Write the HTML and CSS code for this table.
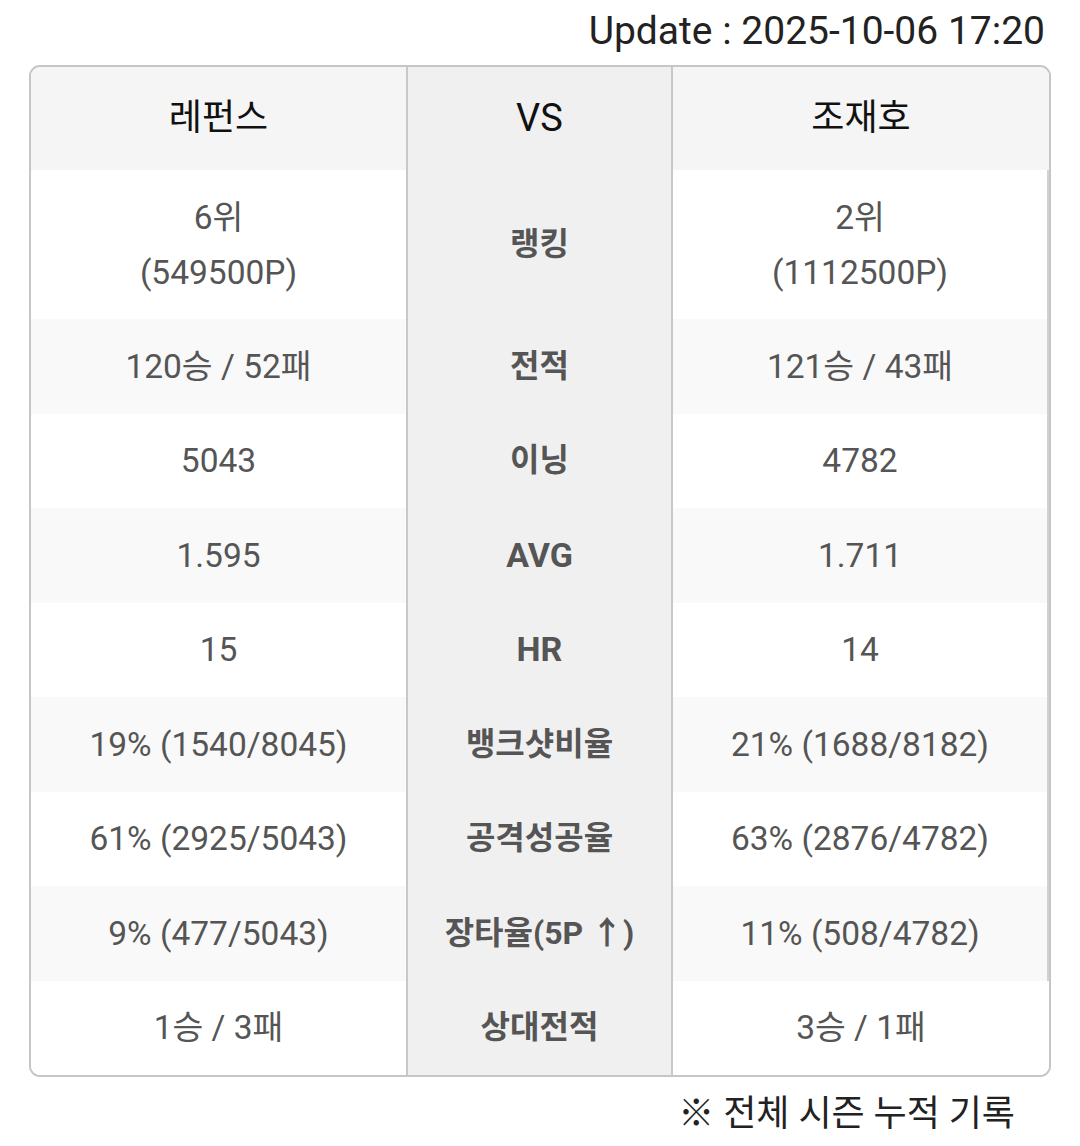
FILE: index.html
```html
<!DOCTYPE html>
<html lang="ko">
<head>
<meta charset="utf-8">
<link rel="stylesheet" href="styles.css">
</head>
<body>
<div class="page">
  <div class="update">Update : 2025-10-06 17:20</div>
  <div class="table">
    <div class="cell head side">레펀스</div>
    <div class="cell head mid latin">VS</div>
    <div class="cell head side">조재호</div>

    <div class="cell side">6위<br>(549500P)</div>
    <div class="cell mid label">랭킹</div>
    <div class="cell side right">2위<br>(1112500P)</div>

    <div class="cell side alt">120승 / 52패</div>
    <div class="cell mid label">전적</div>
    <div class="cell side alt right">121승 / 43패</div>

    <div class="cell side">5043</div>
    <div class="cell mid label">이닝</div>
    <div class="cell side right">4782</div>

    <div class="cell side alt">1.595</div>
    <div class="cell mid label latin">AVG</div>
    <div class="cell side alt right">1.711</div>

    <div class="cell side">15</div>
    <div class="cell mid label latin">HR</div>
    <div class="cell side right">14</div>

    <div class="cell side alt">19% (1540/8045)</div>
    <div class="cell mid label">뱅크샷비율</div>
    <div class="cell side alt right">21% (1688/8182)</div>

    <div class="cell side">61% (2925/5043)</div>
    <div class="cell mid label">공격성공율</div>
    <div class="cell side right">63% (2876/4782)</div>

    <div class="cell side alt">9% (477/5043)</div>
    <div class="cell mid label">장타율(5P ↑)</div>
    <div class="cell side alt right">11% (508/4782)</div>

    <div class="cell side">1승 / 3패</div>
    <div class="cell mid label">상대전적</div>
    <div class="cell side">3승 / 1패</div>
  </div>
  <div class="note">※ 전체 시즌 누적 기록</div>
</div>
</body>
</html>
```

FILE: styles.css
```css
html, body {
  margin: 0;
  padding: 0;
  background: #ffffff;
}

body {
  font-family: Roboto, "Noto Sans CJK KR", sans-serif;
}

.page {
  width: 1080px;
  padding: 0 29px;
  box-sizing: border-box;
}

.update {
  text-align: right;
  font-size: 39px;
  color: #222;
  height: 65px;
  line-height: 62px;
  padding-right: 6px;
}

.table {
  display: grid;
  grid-template-columns: 375px 267px 1fr;
  grid-template-rows: 103px 149px repeat(8, 94.5px);
  border: 2px solid #c6c6c6;
  border-radius: 11px;
  overflow: hidden;
}

.cell {
  display: flex;
  align-items: center;
  justify-content: center;
  text-align: center;
  font-size: 33.5px;
  line-height: 55px;
  color: #555;
  background: #ffffff;
}

.cell.alt {
  background: #f9f9f9;
}

.cell.head {
  background: #f5f5f5;
  color: #111;
  font-size: 36px;
}

.cell.head.latin {
  font-size: 38px;
}

.cell.mid {
  background: #f0f0f0;
  border-left: 2px solid #c8c8c8;
  border-right: 2px solid #c8c8c8;
}

.cell.head.mid {
  background: #f0f0f0;
}

.cell.label {
  font-size: 32px;
  font-weight: 700;
  color: #555;
}

.cell.label.latin {
  font-size: 34px;
}

.cell.right {
  border-right: 2px solid #d2d2d2;
}

.note {
  text-align: right;
  font-size: 36px;
  color: #222;
  padding-right: 36px;
  padding-top: 12px;
  line-height: 50px;
}
```
